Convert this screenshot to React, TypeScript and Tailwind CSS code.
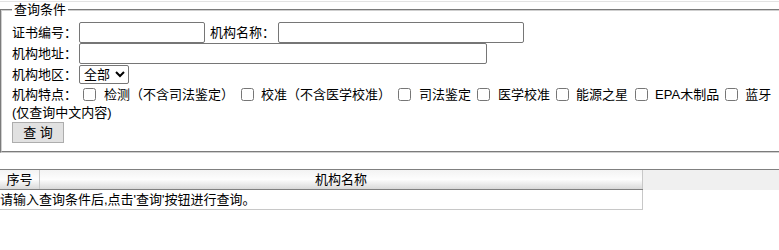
export default function App() {
  const cb = "w-[13px] h-[13px] shrink-0";
  return (
    <div className="w-[779px] h-[250px] overflow-hidden bg-white pt-px text-[13px] leading-[15px] text-black font-['Liberation_Sans','Noto_Sans_CJK_SC',sans-serif]">
      <div className="w-[779px] border-t border-[#e3e3e3]" />
      <fieldset className="w-[800px] border-2 [border-style:groove] border-[#cfcfcf] pl-[10px] pt-[5px] pb-[8px]">
        <legend className="px-[2px] leading-[15px]">查询条件</legend>
        <div className="flex items-center h-[21px] whitespace-nowrap">
          <span>证书编号：</span>
          <input className="ml-[2px] w-[126px] h-[21px] border border-[#767676] rounded-[2px]" />
          <span className="ml-[5px]">机构名称：</span>
          <input className="ml-[3px] w-[246px] h-[21px] border border-[#767676] rounded-[2px]" />
        </div>
        <div className="flex items-center h-[21px] whitespace-nowrap">
          <span>机构地址：</span>
          <input className="ml-[2px] w-[408px] h-[21px] border border-[#767676] rounded-[2px]" />
        </div>
        <div className="flex items-center h-[21px] whitespace-nowrap">
          <span>机构地区：</span>
          <select className="ml-[2px] w-[50px] h-[19px] border border-[#767676] rounded-[2px] text-[13px]" defaultValue="全部">
            <option>全部</option>
          </select>
        </div>
        <div className="flex items-center h-[19px] whitespace-nowrap">
          <span>机构特点：</span>
          <input type="checkbox" className={`${cb} ml-[6px]`} />
          <span className="ml-[8px]">检测（不含司法鉴定）</span>
          <input type="checkbox" className={`${cb} ml-[7px]`} />
          <span className="ml-[7px]">校准（不含医学校准）</span>
          <input type="checkbox" className={`${cb} ml-[7px]`} />
          <span className="ml-[8px]">司法鉴定</span>
          <input type="checkbox" className={`${cb} ml-[6px]`} />
          <span className="ml-[8px]">医学校准</span>
          <input type="checkbox" className={`${cb} ml-[6px]`} />
          <span className="ml-[7px]">能源之星</span>
          <input type="checkbox" className={`${cb} ml-[7px]`} />
          <span className="ml-[7px]">EPA木制品</span>
          <input type="checkbox" className={`${cb} ml-[6px]`} />
          <span className="ml-[7px]">蓝牙</span>
        </div>
        <div className="h-[16px] flex items-center">(仅查询中文内容)</div>
        <button className="mt-[2px] w-[52px] h-[21px] bg-[#e1e1e1] border border-[#adadad] text-[13px] flex items-center justify-center">
          查 询
        </button>
      </fieldset>
      <div className="mt-[16px] w-[779px] border-t border-[#808080] bg-[#f0f0f0]">
        <div className="w-[643px] h-[20px] flex border-b border-[#808080] bg-linear-to-b from-[#f3f3f3] via-[#fdfdfd] to-[#d9d9d9]">
          <div className="w-[40px] border-r border-[#c8c8c8] flex items-center justify-center">序号</div>
          <div className="flex-1 border-r border-[#c8c8c8] flex items-center justify-center">机构名称</div>
        </div>
      </div>
      <div className="w-[643px] h-[20px] border-r border-b border-[#c8c8c8] flex items-center whitespace-nowrap">
        请输入查询条件后,点击'查询'按钮进行查询。
      </div>
    </div>
  );
}
